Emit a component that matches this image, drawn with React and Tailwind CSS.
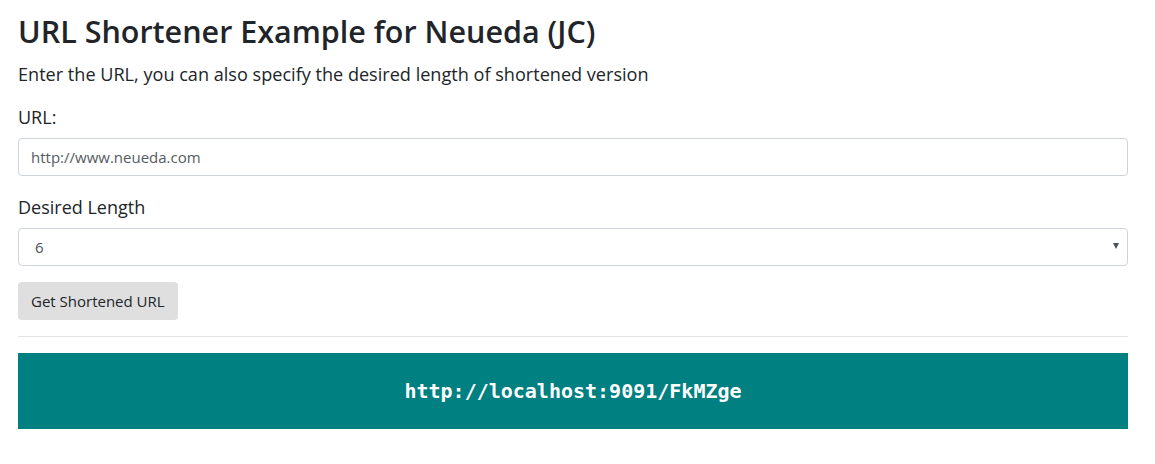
import React, { useState } from "react";

export default function App() {
  const [url, setUrl] = useState("");
  const [len, setLen] = useState("6");

  return (
    <div className="min-h-screen bg-white text-[#212529]" style={{ fontFamily: "'Open Sans', 'Noto Sans', sans-serif" }}>
      <div className="w-[1110px] ml-[18px] pt-[12px]">
        <h1 className="text-[30.5px] leading-[38px] font-semibold mb-[11px]">URL Shortener Example for Neueda (JC)</h1>
        <p className="text-[18.1px] leading-[27px] mb-[16px]">
          Enter the URL, you can also specify the desired length of shortened version
        </p>

        <div className="mb-[18px]">
          <label className="block text-[18px] leading-[27px] mb-[7px]">URL:</label>
          <input
            className="w-full h-[38px] px-[12px] rounded-[4px] border border-[#ced4da] text-[15px] text-[#495057] placeholder:text-[#555b61] outline-none"
            placeholder="http://www.neueda.com"
            value={url}
            onChange={(e) => setUrl(e.target.value)}
          />
        </div>

        <div className="mb-[16px]">
          <label className="block text-[18px] leading-[27px] mb-[7px]">Desired Length</label>
          <div className="relative">
            <select
              className="w-full h-[38px] pl-[16px] pr-[30px] rounded-[4px] border border-[#ced4da] bg-white text-[15px] text-[#495057] appearance-none outline-none"
              value={len}
              onChange={(e) => setLen(e.target.value)}
            >
              {[4, 5, 6, 7, 8, 9, 10].map((n) => (
                <option key={n} value={n}>
                  {n}
                </option>
              ))}
            </select>
            <span className="absolute right-[9px] top-[15px] w-0 h-0 border-l-[3.5px] border-r-[3.5px] border-t-[6px] border-l-transparent border-r-transparent border-t-[#495057]" />
          </div>
        </div>

        <button className="h-[38px] px-[13px] rounded-[4px] bg-[#dfdfdf] text-[15px] text-[#212529]">
          Get Shortened URL
        </button>

        <hr className="mt-[16px] mb-[16px] border-t border-[#e5e5e5]" />

        <div className="h-[76px] bg-[#008080] flex items-center justify-center">
          <span
            className="text-white text-[20px] font-bold"
            style={{ fontFamily: "'DejaVu Sans Mono', 'Liberation Mono', monospace" }}
          >
            http://localhost:9091/FkMZge
          </span>
        </div>
      </div>
    </div>
  );
}
